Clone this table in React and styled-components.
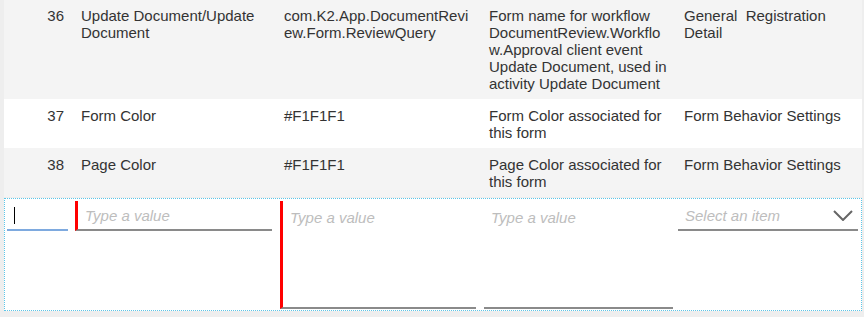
import React from 'react'
import styled, { createGlobalStyle } from 'styled-components'

const GlobalStyle = createGlobalStyle`
    html, body {
        margin: 0;
        padding: 0;
        background: #eeeeee;
    }
    body {
        font-family: "Liberation Sans", Arial, sans-serif;
        font-size: 15px;
        color: #333333;
    }
`

const COLUMNS = '67px 205px 204px 197px 185px'

const Table = styled.div`
    width: 858px;
    margin: -1px 0 0 4px;
`

const Row = styled.div`
    display: grid;
    grid-template-columns: ${COLUMNS};
    background: ${props => (props.$alt ? '#f4f4f4' : '#ffffff')};
    padding: 8px 0 7px;
    line-height: 17px;
`

const Cell = styled.div`
    padding: 0 10px 0 ${props => props.$pl || 9}px;
    text-align: ${props => props.$align || 'left'};
    overflow-wrap: anywhere;
    ${props => props.$num && 'padding: 0 7px 0 0;'}
`

const EditRow = styled.div`
    display: grid;
    grid-template-columns: 66px 205px 204px 197px 184px;
    background: #ffffff;
    border: 1px dotted #5cc6e8;
    margin-top: 1px;
    padding: 2px 0 1px;
    height: 108px;
`

const EditCell = styled.div`
    padding: 0 ${props => props.$pr ?? 4}px 0 ${props => props.$pl ?? 4}px;
`

const Field = styled.div`
    position: relative;
    box-sizing: border-box;
    height: ${props => (props.$multi ? '108px' : '30px')};
    padding: ${props => (props.$multi ? '8px' : '6px')} 8px 0 7px;
    border-left: ${props => (props.$required ? '3px solid #ff0000' : '0')};
    border-bottom: 2px solid ${props => (props.$focused ? '#7eaadf' : '#8a8a8a')};
    line-height: 17px;
`

const Placeholder = styled.span`
    color: #bdbdbd;
    font-style: italic;
`

const Caret = styled.span`
    display: inline-block;
    width: 1px;
    height: 17px;
    background: #000000;
    vertical-align: top;
`

const Chevron = styled.svg`
    position: absolute;
    right: 5px;
    top: 9px;
`

const rows = [
    {
        id: 36,
        name: 'Update Document/Update Document',
        value: 'com.K2.App.DocumentReview.Form.ReviewQuery',
        description: 'Form name for workflow DocumentReview.Workflow.Approval client event Update Document, used in activity Update Document',
        category: 'General\u00a0 Registration Detail',
    },
    {
        id: 37,
        name: 'Form Color',
        value: '#F1F1F1',
        description: 'Form Color associated for this form',
        category: 'Form Behavior Settings',
    },
    {
        id: 38,
        name: 'Page Color',
        value: '#F1F1F1',
        description: 'Page Color associated for this form',
        category: 'Form Behavior Settings',
    },
]

export default function App() {
    return (
        <>
            <GlobalStyle />
            <Table>
                {rows.map((r, i) => (
                    <Row key={r.id} $alt={i % 2 === 0}>
                        <Cell $num $align="right">{r.id}</Cell>
                        <Cell $pl={10}>{r.name}</Cell>
                        <Cell $pl={8}>{r.value}</Cell>
                        <Cell $pl={9}>{r.description}</Cell>
                        <Cell $pl={7}>{r.category}</Cell>
                    </Row>
                ))}
                <EditRow>
                    <EditCell $pl={2} $pr={3}>
                        <Field $focused>
                            <Caret />
                        </Field>
                    </EditCell>
                    <EditCell>
                        <Field $required>
                            <Placeholder>Type a value</Placeholder>
                        </Field>
                    </EditCell>
                    <EditCell>
                        <Field $required $multi>
                            <Placeholder>Type a value</Placeholder>
                        </Field>
                    </EditCell>
                    <EditCell>
                        <Field $multi>
                            <Placeholder>Type a value</Placeholder>
                        </Field>
                    </EditCell>
                    <EditCell $pl={1} $pr={3}>
                        <Field>
                            <Placeholder>Select an item</Placeholder>
                            <Chevron width="20" height="11" viewBox="0 0 20 11">
                                <polyline points="1,1 10,10 19,1" fill="none" stroke="#666666" strokeWidth="2" />
                            </Chevron>
                        </Field>
                    </EditCell>
                </EditRow>
            </Table>
        </>
    )
}
